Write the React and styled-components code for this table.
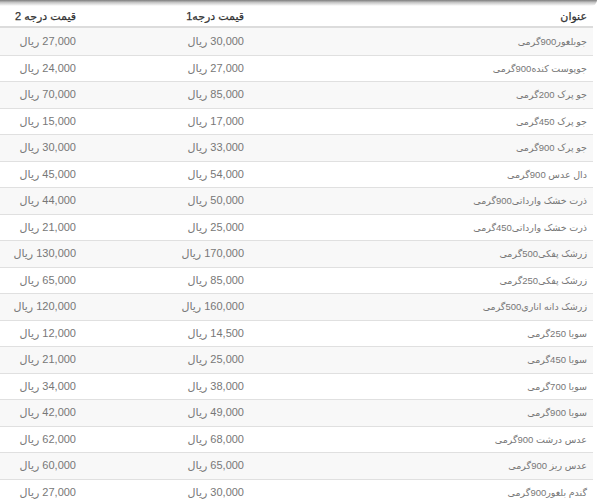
import React from "react";
import styled, { createGlobalStyle } from "styled-components";

const GlobalStyle = createGlobalStyle`
  html, body {
    margin: 0;
    padding: 0;
    background: #fff;
  }
  body {
    font-family: "Liberation Sans", "DejaVu Sans", sans-serif;
  }
`;

const Page = styled.div`
  width: 600px;
  height: 501px;
  overflow: hidden;
`;

const Shade = styled.div`
  width: 597px;
  height: 6px;
  background: linear-gradient(#7d7d7d, #c4c4c4 40%, #fff);
  border-bottom-right-radius: 6px;
`;

const PriceTable = styled.div`
  width: 593px;
  direction: rtl;
`;

const Cells = styled.div`
  display: grid;
  grid-template-columns: 343px 168px 82px;
  align-items: center;
  box-sizing: border-box;
`;

const HeadRow = styled(Cells)`
  height: 22px;
  border-bottom: 2px solid #dcdcdc;
  color: #333;
  font-size: 11px;
  -webkit-text-stroke: 0.25px #333;
`;

const Row = styled(Cells)`
  height: 26.5px;
  border-top: ${(p) => (p.$first ? "none" : "1px solid #e0e0e0")};
  background: ${(p) => (p.$shaded ? "#f8f8f8" : "#fff")};
  color: #777;
`;

const Cell = styled.div`
  padding-right: 6px;
  text-align: right;
  white-space: nowrap;
  font-size: ${(p) => (p.$title ? "9.5px" : "11px")};
`;

const items = [
  ["جوبلغور900گرمی", "30,000", "27,000"],
  ["جوپوست کنده900گرمی", "27,000", "24,000"],
  ["جو پرک 200گرمی", "85,000", "70,000"],
  ["جو پرک 450گرمی", "17,000", "15,000"],
  ["جو پرک 900گرمی", "33,000", "30,000"],
  ["دال عدس 900گرمی", "54,000", "45,000"],
  ["ذرت خشک وارداتی900گرمی", "50,000", "44,000"],
  ["ذرت خشک وارداتی450گرمی", "25,000", "21,000"],
  ["زرشک پفکی500گرمی", "170,000", "130,000"],
  ["زرشک پفکی250گرمی", "85,000", "65,000"],
  ["زرشک دانه اناری500گرمی", "160,000", "120,000"],
  ["سویا 250گرمی", "14,500", "12,000"],
  ["سویا 450گرمی", "25,000", "21,000"],
  ["سویا 700گرمی", "38,000", "34,000"],
  ["سویا 900گرمی", "49,000", "42,000"],
  ["عدس درشت 900گرمی", "68,000", "62,000"],
  ["عدس ریز 900گرمی", "65,000", "60,000"],
  ["گندم بلغور900گرمی", "30,000", "27,000"],
];

const App = () => {
  return (
    <Page>
      <GlobalStyle />
      <Shade />
      <PriceTable>
        <HeadRow>
          <Cell>عنوان</Cell>
          <Cell>قیمت درجه1</Cell>
          <Cell>قیمت درجه 2</Cell>
        </HeadRow>
        {items.map(([title, p1, p2], i) => (
          <Row key={i} $first={i === 0} $shaded={i % 2 === 0}>
            <Cell $title>{title}</Cell>
            <Cell>{p1} ریال</Cell>
            <Cell>{p2} ریال</Cell>
          </Row>
        ))}
      </PriceTable>
    </Page>
  );
};

export default App;
